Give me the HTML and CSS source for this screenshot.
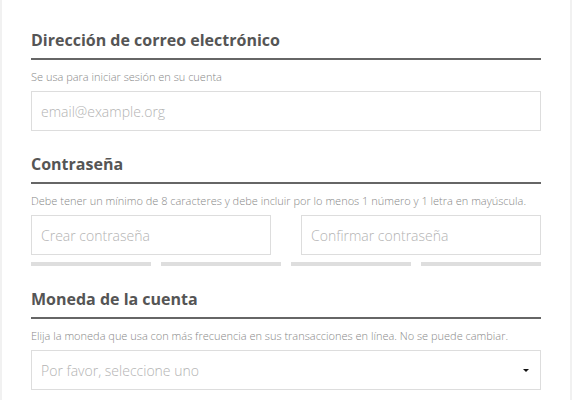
FILE: index.html
```html
<!DOCTYPE html>
<html lang="es">
<head>
<meta charset="utf-8">
<title>Registro</title>
<link rel="stylesheet" href="styles.css">
</head>
<body>
<div class="page">
  <section class="section">
    <h2 class="section-title">Dirección de correo electrónico</h2>
    <p class="hint">Se usa para iniciar sesión en su cuenta</p>
    <div class="field"><span class="placeholder">email@example.org</span></div>
  </section>
  <section class="section">
    <h2 class="section-title">Contraseña</h2>
    <p class="hint">Debe tener un mínimo de 8 caracteres y debe incluir por lo menos 1 número y 1 letra en mayúscula.</p>
    <div class="pw-row">
      <div class="field"><span class="placeholder">Crear contraseña</span></div>
      <div class="field"><span class="placeholder">Confirmar contraseña</span></div>
    </div>
    <div class="strength">
      <span class="bar"></span><span class="bar"></span><span class="bar"></span><span class="bar"></span>
    </div>
  </section>
  <section class="section">
    <h2 class="section-title">Moneda de la cuenta</h2>
    <p class="hint">Elija la moneda que usa con más frecuencia en sus transacciones en línea. No se puede cambiar.</p>
    <div class="field select"><span class="placeholder">Por favor, seleccione uno</span><span class="caret"></span></div>
  </section>
</div>
</body>
</html>
```
FILE: styles.css
```css
html, body {
  margin: 0;
  padding: 0;
  background: #ffffff;
}
body {
  font-family: "Open Sans", "Liberation Sans", sans-serif;
  color: #555;
}
.page {
  box-sizing: border-box;
  width: 572px;
  min-height: 400px;
  padding: 28px 29px 0;
  border-left: 2px solid #f1f1f1;
  border-right: 2px solid #f1f1f1;
  background: #fff;
}
.section + .section {
  margin-top: 21px;
}
.section-title {
  margin: 0;
  font-size: 16px;
  line-height: 22px;
  font-weight: 700;
  color: #555;
  padding: 1px 0 7px;
  border-bottom: 2px solid #666;
}
.hint {
  margin: 0;
  padding: 9px 0 7px;
  font-size: 11px;
  line-height: 15px;
  font-weight: 300;
  color: #888;
  white-space: nowrap;
}
.field {
  box-sizing: border-box;
  height: 40px;
  border: 1px solid #ddd;
  padding: 0 9px;
  display: flex;
  align-items: center;
  background: #fff;
}
.placeholder {
  font-size: 14px;
  font-weight: 300;
  color: #b3b3b3;
}
.pw-row {
  display: grid;
  grid-template-columns: 1fr 1fr;
  gap: 30px;
}
.strength {
  display: grid;
  grid-template-columns: repeat(4, 1fr);
  gap: 10px;
  margin-top: 7px;
}
.bar {
  height: 4px;
  background: #dedede;
}
.select {
  justify-content: space-between;
  padding-right: 11px;
}
.caret {
  width: 0;
  height: 0;
  border-left: 3px solid transparent;
  border-right: 3px solid transparent;
  border-top: 3px solid #111;
}
```
